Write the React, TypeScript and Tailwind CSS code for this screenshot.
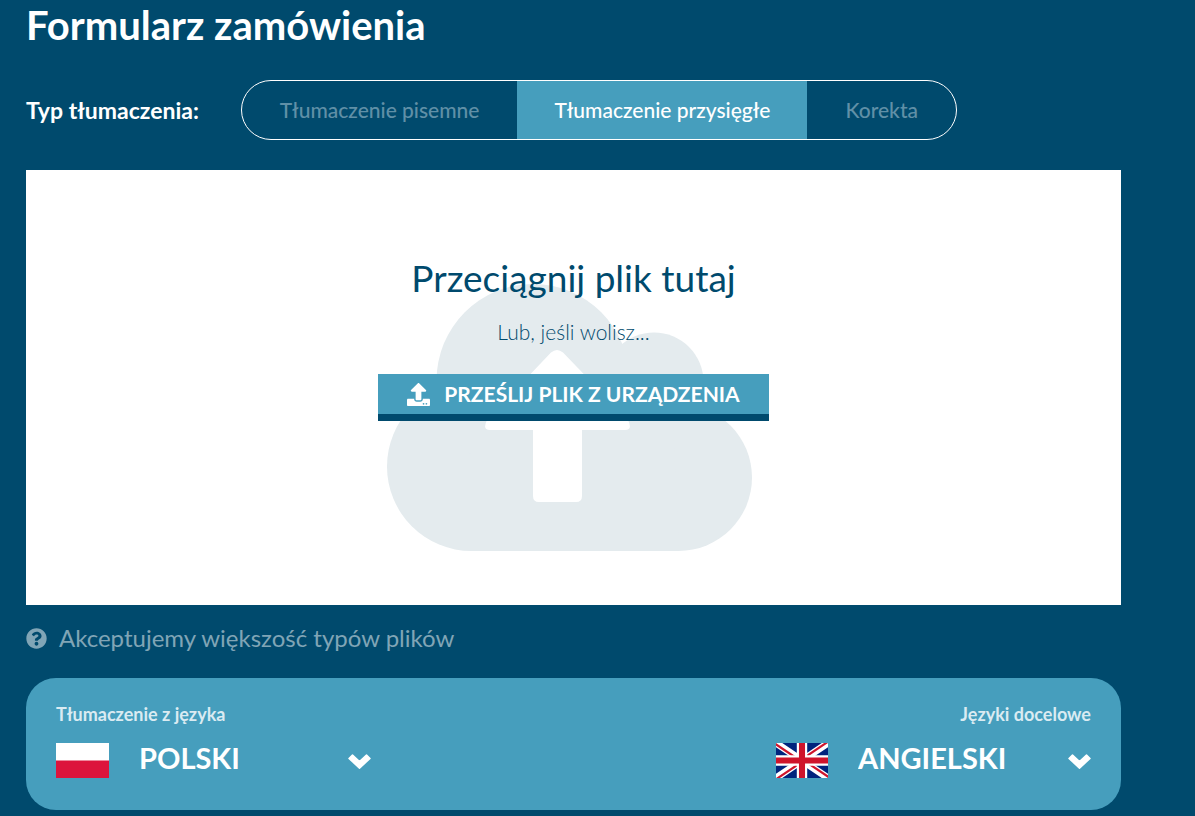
import React, { useState } from 'react';
import { FaQuestionCircle, FaUpload } from 'react-icons/fa';

const TYPES = ['Tłumaczenie pisemne', 'Tłumaczenie przysięgłe', 'Korekta'];
const LANGUAGES = ['Polski', 'Angielski'];

function CloudUpload() {
  return (
    <svg viewBox="0 0 365 268" className="h-[268px] w-[365px]" aria-hidden="true">
      <g fill="#e4ebee">
        <circle cx="84.5" cy="182.5" r="84.5" />
        <circle cx="291.5" cy="193.5" r="73.5" />
        <circle cx="146" cy="96.5" r="96.5" />
        <circle cx="267" cy="98" r="49.5" />
        <path d="M84 100h200l8 167H84z" />
      </g>
      <path
        fill="#fff"
        d="M164 68.500q6-5 12 0L241 136q5 10-3 10H195v66q0 6-6 6H152q-6 0-6-6V146H103q-8 0-3-10z"
      />
    </svg>
  );
}

function Chevron() {
  return (
    <svg
      viewBox="0 0 23 15"
      className="pointer-events-none absolute top-3 right-0 h-[15px] w-[23px]"
      aria-hidden="true"
    >
      <path
        fill="#fff"
        stroke="#fff"
        strokeWidth="1.500"
        strokeLinejoin="round"
        d="M4.500 1l7 6.500 7-6.500L22 4.500l-10.500 9.600L1 4.500z"
      />
    </svg>
  );
}

function PolishFlag() {
  return (
    <svg viewBox="0 0 53 35" className="h-[35px] w-[53px] shrink-0" aria-hidden="true">
      <path fill="#fff" d="M0 0h53v18H0z" />
      <path fill="#dc143c" d="M0 17.500h53V35H0z" />
    </svg>
  );
}

function BritishFlag() {
  return (
    <svg viewBox="0 0 60 40" preserveAspectRatio="none" className="h-[35px] w-[52px] shrink-0" aria-hidden="true">
      <clipPath id="uk">
        <path d="M30 20h30v20zv20H0zH0V0zV0h30z" />
      </clipPath>
      <path fill="#00247d" d="M0 0h60v40H0z" />
      <path stroke="#fff" strokeWidth="8" d="M0 0l60 40M60 0L0 40" />
      <path stroke="#cf142b" strokeWidth="5" clipPath="url(#uk)" d="M0 0l60 40M60 0L0 40" />
      <path stroke="#fff" strokeWidth="12" d="M30 0v40M0 20h60" />
      <path stroke="#cf142b" strokeWidth="7" d="M30 0v40M0 20h60" />
    </svg>
  );
}

interface LanguageSelectProps {
  id: string;
  label: string;
  initial: string;
  flag: React.ReactNode;
  alignRight?: boolean;
}

function LanguageSelect({ id, label, initial, flag, alignRight }: LanguageSelectProps) {
  const [value, setValue] = useState(initial);

  return (
    <div className="w-[315px]">
      <label
        htmlFor={id}
        className={
          alignRight
            ? 'block text-right text-lg leading-6 font-bold text-[#daebf2]'
            : 'block text-lg leading-6 font-bold text-[#daebf2]'
        }
      >
        {label}
      </label>
      <div className="mt-3 flex h-11 items-center gap-[30px]">
        {flag}
        <div className="relative flex-1">
          <select
            id={id}
            value={value}
            onChange={(e) => setValue(e.target.value)}
            className="block h-9 w-full appearance-none bg-transparent pb-1 text-[29px] leading-8 font-bold text-white uppercase outline-none"
          >
            {LANGUAGES.map((lang) => (
              <option key={lang}>{lang}</option>
            ))}
          </select>
          <Chevron />
        </div>
      </div>
    </div>
  );
}

export default function App() {
  const [type, setType] = useState(TYPES[1]);

  return (
    <main className="min-h-screen bg-[#004a6d] pr-[74px] pb-1.5 pl-[26px] font-['Lato',sans-serif] text-white">
      <h1 className="text-[40px] leading-[50px] font-bold">Formularz zamówienia</h1>

      <div className="mt-[30px] flex items-center gap-[42px]">
        <span id="type-label" className="text-[23px] font-bold whitespace-nowrap">
          Typ tłumaczenia:
        </span>
        <div
          role="radiogroup"
          aria-labelledby="type-label"
          className="flex h-[60px] overflow-hidden rounded-full border border-white"
        >
          {TYPES.map((item) => (
            <button
              key={item}
              type="button"
              role="radio"
              aria-checked={item === type}
              onClick={() => setType(item)}
              className={
                item === type
                  ? 'bg-[#469ebd] px-[37px] text-[21px] font-medium whitespace-nowrap text-white'
                  : 'px-[38px] text-[21px] font-medium whitespace-nowrap text-[#6090a7]'
              }
            >
              {item}
            </button>
          ))}
        </div>
      </div>

      <section className="mt-[30px] grid h-[435px] justify-items-center bg-white text-[#004a6d]">
        <div className="col-start-1 row-start-1 pt-[114px] pr-2">
          <CloudUpload />
        </div>
        <div className="z-10 col-start-1 row-start-1 flex flex-col items-center pt-20">
          <h2 className="text-[37px] leading-[56px]">Przeciągnij plik tutaj</h2>
          <p className="mt-2.5 text-[21px] leading-8 font-light">Lub, jeśli wolisz...</p>
          <button
            type="button"
            className="mt-[26px] flex h-[47px] items-center gap-3.5 border-b-[7px] border-[#004a6d] bg-[#469ebd] px-[29px] text-[21px] font-bold whitespace-nowrap text-white"
          >
            <FaUpload className="h-[23px] w-[23px]" />
            PRZEŚLIJ PLIK Z URZĄDZENIA
          </button>
        </div>
      </section>

      <p className="mt-[15px] flex items-center gap-3 text-2xl leading-9 text-[#80a5b6]">
        <FaQuestionCircle className="h-[21px] w-[21px]" />
        Akceptujemy większość typów plików
      </p>

      <section className="mt-[22px] flex h-[132px] justify-between rounded-[30px] bg-[#469ebd] px-[30px] pt-6">
        <LanguageSelect id="source" label="Tłumaczenie z języka" initial="Polski" flag={<PolishFlag />} />
        <LanguageSelect id="target" label="Języki docelowe" initial="Angielski" flag={<BritishFlag />} alignRight />
      </section>
    </main>
  );
}
